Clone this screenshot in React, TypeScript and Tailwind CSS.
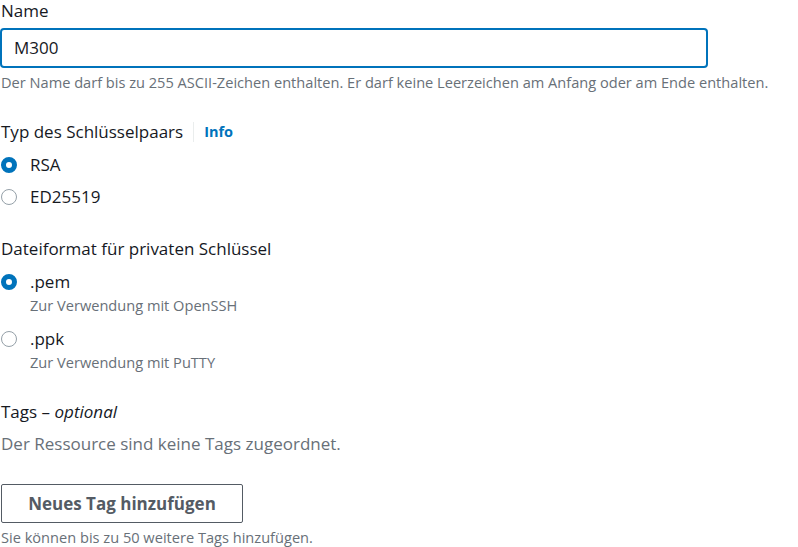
import React from 'react';

const font = { fontFamily: '"Open Sans", "Noto Sans", sans-serif' };

function Radio({ checked }: { checked?: boolean }) {
    return checked ? (
        <span className="box-border inline-block w-[16px] h-[16px] rounded-full border-[5px] border-[#0073bb] bg-white shrink-0" />
    ) : (
        <span className="box-border inline-block w-[16px] h-[16px] rounded-full border-[1.5px] border-[#95a0a8] bg-white shrink-0" />
    );
}

function Option({ label, sub, checked, className }: { label: string; sub?: string; checked?: boolean; className?: string }) {
    return (
        <div className={className}>
            <div className="flex items-center h-[22px]">
                <span className="w-[29px] flex items-center">
                    <Radio checked={checked} />
                </span>
                <span className="text-[17px] leading-[22px] text-[#16191f]">{label}</span>
            </div>
            {sub && <div className="pl-[29px] mt-[2px] text-[14.6px] leading-[20px] text-[#687078]">{sub}</div>}
        </div>
    );
}

export default function App() {
    return (
        <div className="w-[798px] h-[547px] bg-white overflow-hidden pl-[1px]" style={font}>
            <div className="text-[17px] leading-[22px] text-[#16191f]">Name</div>
            <div className="mt-[6px] ml-[-1px] w-[708px] h-[40px] rounded-[4px] border-2 border-[#0073bb] flex items-center px-[12px] text-[17px] text-[#16191f]">
                M300
            </div>
            <div className="mt-[4px] text-[14.6px] leading-[20px] text-[#687078]">
                Der Name darf bis zu 255 ASCII-Zeichen enthalten. Er darf keine Leerzeichen am Anfang oder am Ende enthalten.
            </div>

            <div className="mt-[29px] flex items-center h-[22px] text-[17px] text-[#16191f]">
                <span>Typ des Schlüsselpaars</span>
                <span className="mx-[10px] w-px h-[20px] bg-[#eaeded]" />
                <span className="text-[14.5px] font-bold text-[#0073bb]">Info</span>
            </div>
            <Option className="mt-[11px]" label="RSA" checked />
            <Option className="mt-[10px]" label="ED25519" />

            <div className="mt-[30px] text-[17px] leading-[22px] text-[#16191f]">Dateiformat für privaten Schlüssel</div>
            <Option className="mt-[11px]" label=".pem" sub="Zur Verwendung mit OpenSSH" checked />
            <Option className="mt-[13px]" label=".ppk" sub="Zur Verwendung mit PuTTY" />

            <div className="mt-[29px] text-[17px] leading-[22px] text-[#16191f]">
                Tags – <i>optional</i>
            </div>
            <div className="mt-[10px] text-[17px] leading-[22px] text-[#687078]">Der Ressource sind keine Tags zugeordnet.</div>

            <button className="mt-[29px] w-[242px] h-[39px] rounded-[2px] border border-[#545b64] bg-white text-[17px] font-bold text-[#545b64]">
                Neues Tag hinzufügen
            </button>
            <div className="mt-[4px] text-[14.6px] leading-[20px] text-[#687078]">Sie können bis zu 50 weitere Tags hinzufügen.</div>
        </div>
    );
}
